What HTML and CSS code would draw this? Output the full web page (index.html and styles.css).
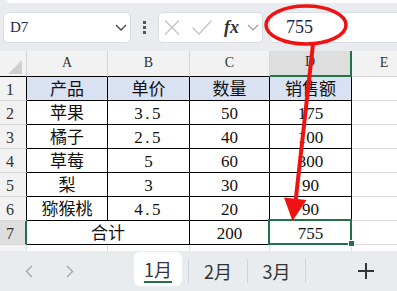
FILE: index.html
```html
<!DOCTYPE html>
<html lang="zh-CN">
<head>
    <meta charset="UTF-8">
    <meta name="viewport" content="width=device-width, initial-scale=1.0">
    <title>销售统计</title>
    <link rel="stylesheet" href="styles.css">
</head>
<body>

    <div class="top-strip"></div>

    <!-- Formula bar -->
    <div class="formula-row">
        <div class="name-box">
            <span class="cell-ref">D7</span>
            <svg width="12" height="7" viewBox="0 0 12 7"><path d="M1 1 L6 6 L11 1" fill="none" stroke="#444" stroke-width="1.3"/></svg>
        </div>
        <div class="dots"><span></span><span></span><span></span></div>
        <div class="fx-box">
            <svg class="ico-x" width="16" height="15" viewBox="0 0 16 15"><path d="M1 0.5 L15 14.5 M15 0.5 L1 14.5" stroke="#c4c4c4" stroke-width="1.4"/></svg>
            <svg class="ico-ok" width="20" height="15" viewBox="0 0 20 15"><path d="M0.5 7.5 L7 14 L19.5 0.5" fill="none" stroke="#c4c4c4" stroke-width="1.4"/></svg>
            <span class="fx">fx</span>
            <svg class="ico-down" width="12" height="7" viewBox="0 0 12 7"><path d="M1 1 L6 6 L11 1" fill="none" stroke="#999" stroke-width="1.2"/></svg>
        </div>
        <div class="input-box">755</div>
    </div>

    <!-- Grid -->
    <div class="sheet">
        <table class="grid">
            <colgroup>
                <col class="c-head"><col class="c-a"><col class="c-b"><col class="c-c"><col class="c-d"><col class="c-e">
            </colgroup>
            <tr class="col-head">
                <th class="corner"><svg width="16" height="16" viewBox="0 0 16 16"><polygon points="15,1 15,15 1,15" fill="#cfcfcf"/></svg></th>
                <th>A</th><th>B</th><th>C</th><th class="on">D</th><th class="last">E</th>
            </tr>
            <tr class="title">
                <th>1</th><td>产品</td><td>单价</td><td>数量</td><td>销售额</td><td class="free"></td>
            </tr>
            <tr>
                <th>2</th><td>苹果</td><td class="dec">3.5</td><td>50</td><td>175</td><td class="free"></td>
            </tr>
            <tr>
                <th>3</th><td>橘子</td><td class="dec">2.5</td><td>40</td><td>100</td><td class="free"></td>
            </tr>
            <tr>
                <th>4</th><td>草莓</td><td>5</td><td>60</td><td>300</td><td class="free"></td>
            </tr>
            <tr>
                <th>5</th><td>梨</td><td>3</td><td>30</td><td>90</td><td class="free"></td>
            </tr>
            <tr>
                <th>6</th><td>猕猴桃</td><td class="dec">4.5</td><td>20</td><td>90</td><td class="free"></td>
            </tr>
            <tr>
                <th class="on">7</th><td colspan="2">合计</td><td>200</td><td class="sel">755</td><td class="free"></td>
            </tr>
            <tr class="cut">
                <th></th><td></td><td></td><td></td><td></td><td class="free"></td>
            </tr>
        </table>
    </div>

    <!-- Sheet tabs -->
    <div class="tabbar">
        <svg class="nav-prev" width="8" height="13" viewBox="0 0 8 13"><path d="M7 1 L1.5 6.5 L7 12" fill="none" stroke="#a3a7ac" stroke-width="1.4"/></svg>
        <svg class="nav-next" width="8" height="13" viewBox="0 0 8 13"><path d="M1 1 L6.5 6.5 L1 12" fill="none" stroke="#a3a7ac" stroke-width="1.4"/></svg>
        <div class="tab active">1月</div>
        <span class="sep"></span>
        <div class="tab t2">2月</div>
        <span class="sep"></span>
        <div class="tab t3">3月</div>
        <span class="sep"></span>
        <svg class="add" width="16" height="16" viewBox="0 0 16 16"><path d="M8 0 V16 M0 8 H16" stroke="#333" stroke-width="2"/></svg>
    </div>

    <!-- red annotation drawn over the sheet -->
    <svg class="annot" width="397" height="291" viewBox="0 0 397 291">
        <ellipse cx="306" cy="25" rx="40" ry="19" fill="none" stroke="#f01212" stroke-width="3.5"/>
        <line x1="313" y1="44" x2="295.5" y2="202" stroke="#f01212" stroke-width="4"/>
        <polygon points="284,197.5 306.5,200 292.5,221" fill="#f01212"/>
    </svg>

</body>
</html>
```

FILE: styles.css
```css
:root {
    --bar: #e9ebee;
    --line: #dcdcdc;
    --head: #f2f2f2;
    --green: #217346;
    --title: #d9e1f2;
}

html, body {
    margin: 0;
}

body {
    width: 397px;
    height: 291px;
    overflow: hidden;
    position: relative;
    background: var(--bar);
    font-family: "Liberation Serif", "Noto Sans CJK SC", serif;
    color: #111;
}

.top-strip {
    height: 3px;
    margin-left: 7px;
    background: #fff;
    border-radius: 0 0 0 6px;
}

/* Formula bar */
.formula-row {
    display: flex;
    align-items: center;
    height: 31px;
    margin: 9px 0 8px 3px;
}

.name-box,
.fx-box,
.input-box {
    height: 31px;
    box-sizing: border-box;
    background: #fff;
    border: 1px solid #dadde1;
    border-radius: 5px;
    display: flex;
    align-items: center;
}

.name-box {
    width: 128px;
    justify-content: space-between;
    padding: 0 3px 0 6px;
}

.cell-ref {
    font-size: 15px;
    color: #1c2b45;
}

.dots {
    width: 27px;
    display: flex;
    flex-direction: column;
    align-items: center;
    gap: 2px;
}

.dots span {
    width: 3px;
    height: 3px;
    background: #555;
}

.fx-box {
    width: 105px;
    padding-left: 5px;
}

.ico-ok { margin-left: 12px; }

.fx {
    margin-left: 12px;
    font-size: 18px;
    font-style: italic;
    font-weight: bold;
    color: #333;
}

.ico-down { margin-left: 8px; }

.input-box {
    flex: 1;
    margin: 0 -8px 0 6px;
    padding-left: 16px;
    font-size: 18px;
    color: #1c2b45;
}

/* Grid */
.sheet {
    height: 200px;
    overflow: hidden;
    background: #fff;
}

.grid {
    border-collapse: separate;
    border-spacing: 0;
    table-layout: fixed;
    width: 417px;
}

.c-head { width: 27px; }
.c-a { width: 81px; }
.c-b { width: 82px; }
.c-c { width: 80px; }
.c-d { width: 82px; }
.c-e { width: 65px; }

.grid th,
.grid td {
    box-sizing: border-box;
    height: 24px;
    padding: 0;
    text-align: center;
    vertical-align: bottom;
    line-height: 21px;
    font-weight: normal;
    white-space: nowrap;
}

.grid td {
    font-size: 17px;
    border-right: 1px solid #000;
    border-bottom: 1px solid #000;
}

.grid td.free {
    border-right: 1px solid var(--line);
    border-bottom: 1px solid var(--line);
}

.grid tr > th {
    background: var(--head);
    font-size: 16px;
    color: #333;
    text-align: left;
    padding-left: 6px;
    border-right: 1px solid #000;
    border-bottom: 1px solid #d6d6d6;
}

.grid .col-head th {
    height: 25px;
    font-size: 14px;
    text-align: center;
    padding: 0 0 3px;
    border-right: 1px solid #d6d6d6;
    border-bottom: 1px solid #000;
}

.grid .col-head th.corner {
    padding: 0 3px 1px 0;
    text-align: right;
    line-height: 0;
}

.grid .col-head th.on {
    background: #dedede;
    border-bottom: 2px solid var(--green);
}

.grid .col-head th.last {
    border-bottom-color: #d6d6d6;
}

.grid tr > th.on {
    background: #dedede;
    border-right: 2px solid var(--green);
}

.title td {
    background: var(--title);
}

.title td.free {
    background: #fff;
}

.dec {
    letter-spacing: 2.5px;
}

.sel {
    position: relative;
}

.sel::before {
    content: "";
    position: absolute;
    left: -2px;
    top: -2px;
    right: -1px;
    bottom: -1px;
    border: 2px solid var(--green);
}

.sel::after {
    content: "";
    position: absolute;
    right: -4px;
    bottom: -3px;
    width: 5px;
    height: 5px;
    background: var(--green);
    border: 1px solid #fff;
}

.grid tr.cut th,
.grid tr.cut td {
    height: 8px;
    border-bottom: none;
}

.grid tr.cut td {
    border-right: 1px solid var(--line);
}

.grid tr.cut th {
    border-right: 1px solid #d6d6d6;
}

/* Sheet tabs */
.tabbar {
    height: 40px;
    display: flex;
    align-items: center;
    background: #e9ecef;
    font-family: "Noto Sans CJK SC", sans-serif;
    font-size: 18px;
    color: #333;
}

.nav-prev { margin-left: 25px; }
.nav-next { margin-left: 33px; }

.tab {
    height: 34px;
    display: flex;
    align-items: center;
    justify-content: center;
}

.tab.active {
    position: relative;
    width: 48px;
    margin: -4px 0 0 60px;
    background: #fff;
    border-radius: 6px;
}

.tab.active::after {
    content: "";
    position: absolute;
    left: 10px;
    right: 10px;
    bottom: 3px;
    height: 2px;
    background: var(--green);
}

.sep {
    width: 1px;
    height: 24px;
    background: #cfd3d8;
}

.tab.active + .sep { margin-left: 6px; }

.t2 { width: 58px; }
.t3 { width: 57px; }

.add { margin-left: 52px; }

.annot {
    position: absolute;
    top: 0;
    left: 0;
    pointer-events: none;
}
```
